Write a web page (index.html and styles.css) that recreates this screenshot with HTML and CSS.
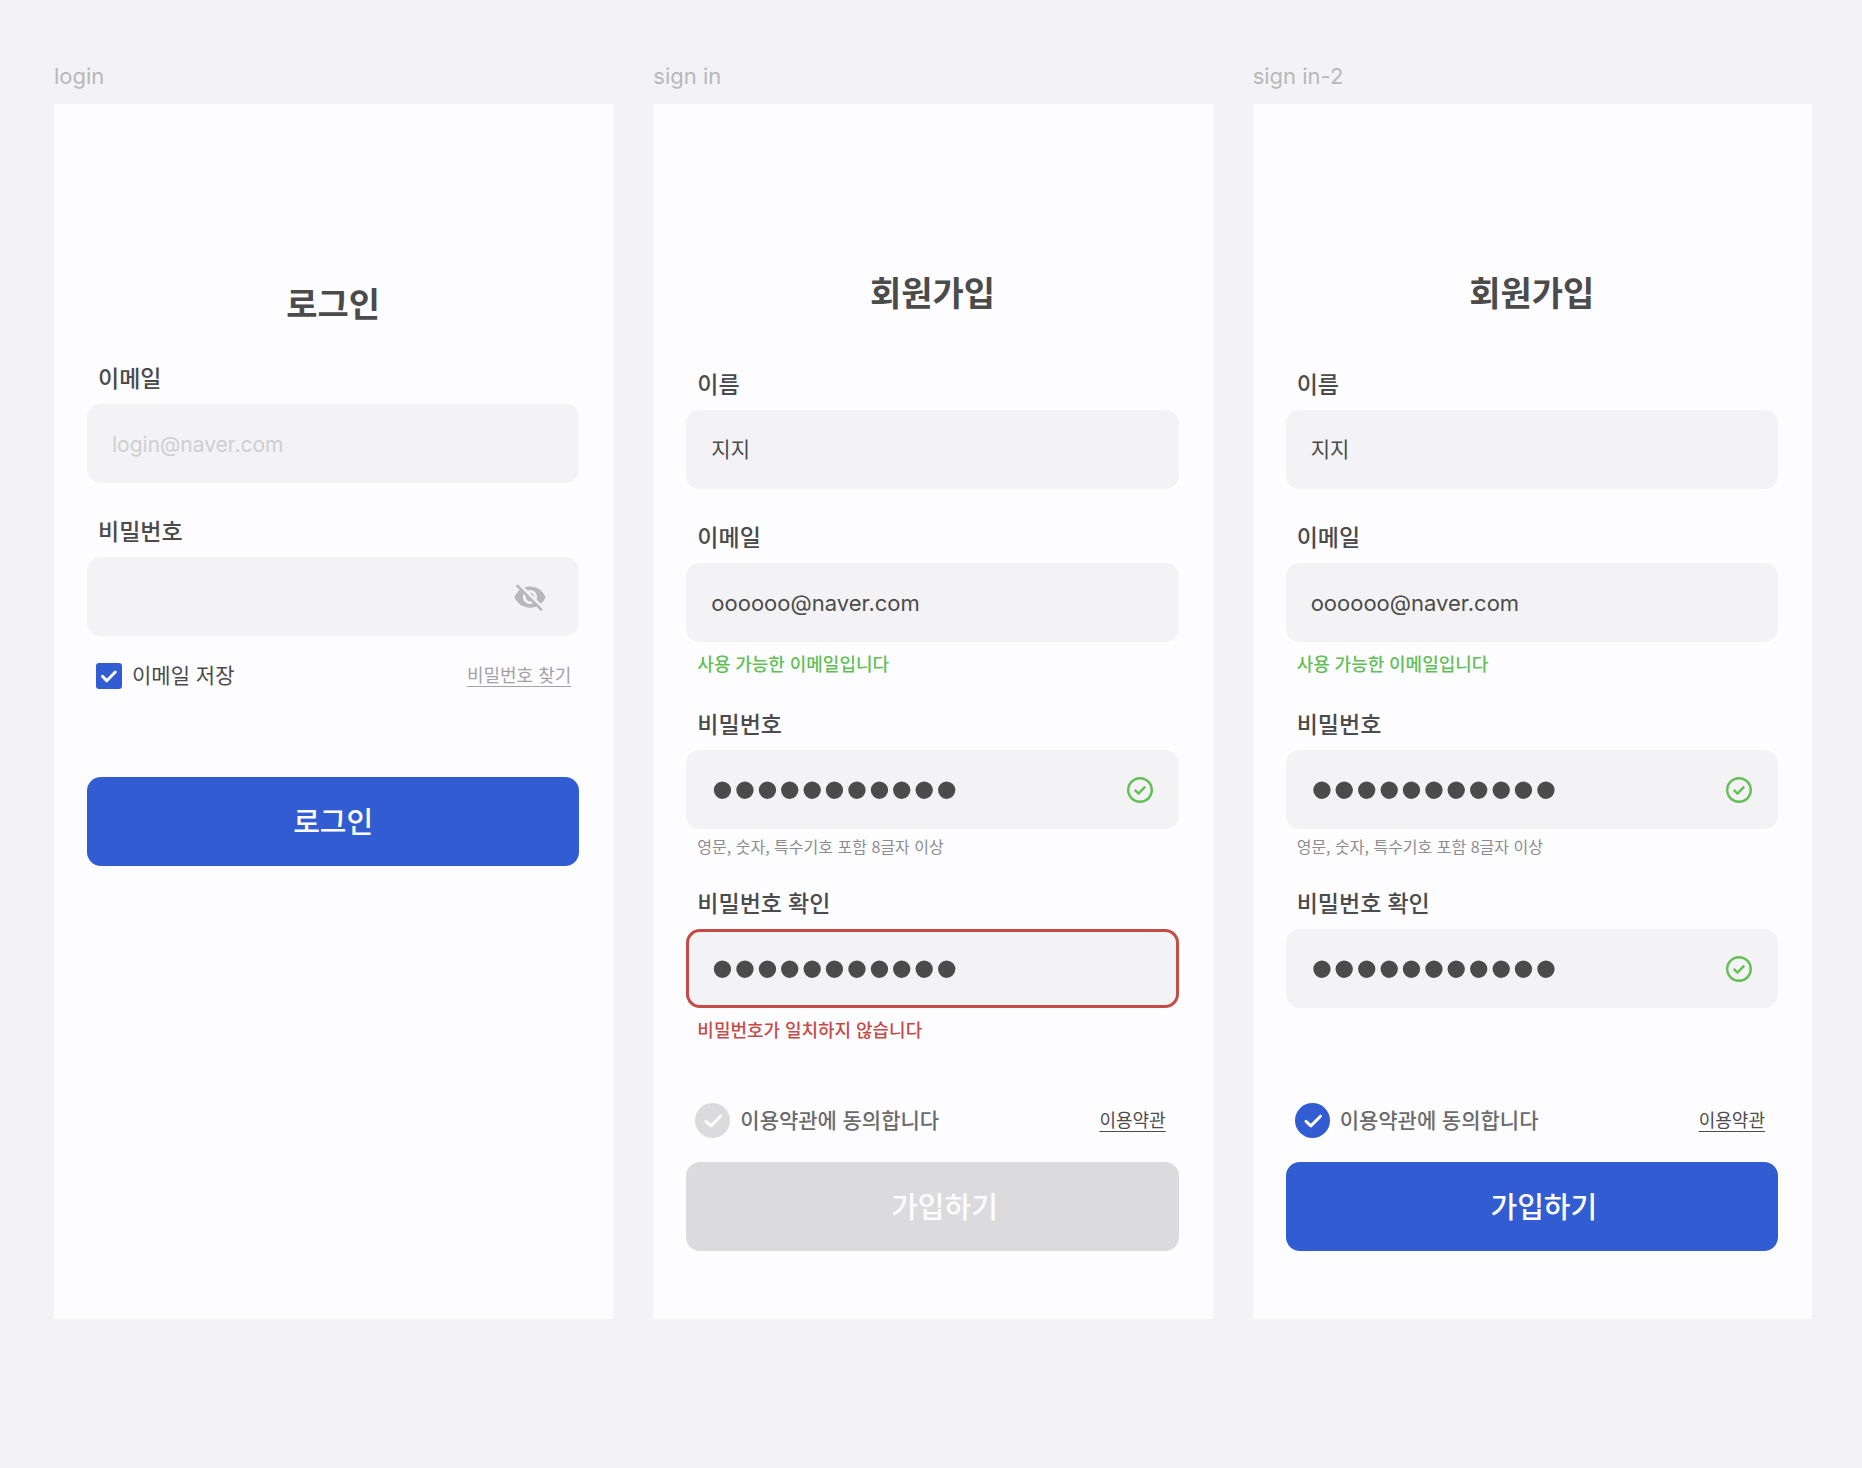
FILE: index.html
```html
<!DOCTYPE html>
<html lang="ko">
<head>
    <meta charset="UTF-8">
    <meta name="viewport" content="width=device-width, initial-scale=1.0">
    <title>로그인 / 회원가입</title>
    <link rel="stylesheet" href="styles.css">
</head>
<body>
    <main class="board">
        <!-- Login -->
        <section class="screen">
            <p class="screen-name">login</p>
            <form class="panel panel-login">
                <h1 class="title">로그인</h1>
                <div class="field">
                    <label for="login-email">이메일</label>
                    <div class="input-box">
                        <input type="email" id="login-email" placeholder="login@naver.com">
                    </div>
                </div>
                <div class="field">
                    <label for="login-password">비밀번호</label>
                    <div class="input-box">
                        <input type="password" id="login-password">
                        <button type="button" class="eye-button" aria-label="비밀번호 보기">
                            <svg viewBox="0 0 24 24" fill="currentColor"><path d="M12 7c2.76 0 5 2.24 5 5 0 .65-.13 1.26-.36 1.83l2.92 2.92c1.51-1.26 2.7-2.89 3.43-4.75-1.73-4.39-6-7.5-11-7.5-1.4 0-2.74.25-3.98.7l2.16 2.16C10.74 7.13 11.35 7 12 7zM2 4.27l2.28 2.28.46.46C3.08 8.3 1.78 10.02 1 12c1.73 4.39 6 7.5 11 7.5 1.55 0 3.03-.3 4.38-.84l.42.42L19.73 22 21 20.73 3.27 3 2 4.27zM7.53 9.8l1.55 1.55c-.05.21-.08.43-.08.65 0 1.66 1.34 3 3 3 .22 0 .44-.03.65-.08l1.55 1.55c-.67.33-1.41.53-2.2.53-2.76 0-5-2.24-5-5 0-.79.2-1.53.53-2.2zm4.31-.78l3.15 3.15.02-.16c0-1.66-1.34-3-3-3l-.17.01z"/></svg>
                        </button>
                    </div>
                </div>
                <div class="option-row">
                    <label class="check">
                        <span class="check-mark">
                            <input type="checkbox" checked>
                            <svg viewBox="0 0 26 26"><path d="M6.5 13.3l4.2 4.5 8.6-8.8"/></svg>
                        </span>
                        이메일 저장
                    </label>
                    <a href="#" class="find-link">비밀번호 찾기</a>
                </div>
                <button type="submit" class="submit">로그인</button>
            </form>
        </section>

        <!-- Sign in: password mismatch -->
        <section class="screen">
            <p class="screen-name">sign in</p>
            <form class="panel panel-join">
                <h1 class="title">회원가입</h1>
                <div class="field">
                    <label for="join-name">이름</label>
                    <div class="input-box">
                        <input type="text" id="join-name" value="지지">
                    </div>
                </div>
                <div class="field">
                    <label for="join-email">이메일</label>
                    <div class="input-box">
                        <input type="email" id="join-email" value="oooooo@naver.com">
                    </div>
                    <p class="message success">사용 가능한 이메일입니다</p>
                </div>
                <div class="field">
                    <label for="join-password">비밀번호</label>
                    <div class="input-box">
                        <input type="password" id="join-password" value="abcdef123!@">
                        <svg class="valid-icon" viewBox="0 0 26 26"><circle cx="13" cy="13" r="11.8"/><path d="M7.8 12.9l3.7 3.7 6.7-7"/></svg>
                    </div>
                    <p class="guide">영문, 숫자, 특수기호 포함 8글자 이상</p>
                </div>
                <div class="field">
                    <label for="join-confirm">비밀번호 확인</label>
                    <div class="input-box invalid">
                        <input type="password" id="join-confirm" value="abcdef123!#" aria-invalid="true">
                    </div>
                    <p class="message error">비밀번호가 일치하지 않습니다</p>
                </div>
                <div class="agree-row">
                    <label class="check">
                        <span class="check-mark round">
                            <input type="checkbox">
                            <svg viewBox="0 0 35 35"><path d="M11 18.3l4.9 4.6 9.6-9.7"/></svg>
                        </span>
                        이용약관에 동의합니다
                    </label>
                    <a href="#" class="terms-link">이용약관</a>
                </div>
                <button type="submit" class="submit" disabled>가입하기</button>
            </form>
        </section>

        <!-- Sign in: all valid -->
        <section class="screen">
            <p class="screen-name">sign in-2</p>
            <form class="panel panel-join">
                <h1 class="title">회원가입</h1>
                <div class="field">
                    <label for="join2-name">이름</label>
                    <div class="input-box">
                        <input type="text" id="join2-name" value="지지">
                    </div>
                </div>
                <div class="field">
                    <label for="join2-email">이메일</label>
                    <div class="input-box">
                        <input type="email" id="join2-email" value="oooooo@naver.com">
                    </div>
                    <p class="message success">사용 가능한 이메일입니다</p>
                </div>
                <div class="field">
                    <label for="join2-password">비밀번호</label>
                    <div class="input-box">
                        <input type="password" id="join2-password" value="abcdef123!@">
                        <svg class="valid-icon" viewBox="0 0 26 26"><circle cx="13" cy="13" r="11.8"/><path d="M7.8 12.9l3.7 3.7 6.7-7"/></svg>
                    </div>
                    <p class="guide">영문, 숫자, 특수기호 포함 8글자 이상</p>
                </div>
                <div class="field">
                    <label for="join2-confirm">비밀번호 확인</label>
                    <div class="input-box">
                        <input type="password" id="join2-confirm" value="abcdef123!@">
                        <svg class="valid-icon" viewBox="0 0 26 26"><circle cx="13" cy="13" r="11.8"/><path d="M7.8 12.9l3.7 3.7 6.7-7"/></svg>
                    </div>
                </div>
                <div class="agree-row">
                    <label class="check">
                        <span class="check-mark round">
                            <input type="checkbox" checked>
                            <svg viewBox="0 0 35 35"><path d="M11 18.3l4.9 4.6 9.6-9.7"/></svg>
                        </span>
                        이용약관에 동의합니다
                    </label>
                    <a href="#" class="terms-link">이용약관</a>
                </div>
                <button type="submit" class="submit">가입하기</button>
            </form>
        </section>
    </main>
</body>
</html>
```
FILE: styles.css
```css
* {
    box-sizing: border-box;
}
body {
    margin: 0;
    font-family: Inter, "Noto Sans CJK KR", sans-serif;
    background-color: #f3f3f5;
    color: #4b4b4b;
}
h1, p {
    margin: 0;
}
input, button {
    font-family: inherit;
    border: none;
    padding: 0;
}
.board {
    display: flex;
    gap: 40px;
    min-height: 100vh;
    padding: 62px 50px 149px 54px;
}
.screen {
    flex: 1;
    min-width: 0;
    display: flex;
    flex-direction: column;
}
.screen-name {
    font-size: 22px;
    line-height: 28px;
    margin-bottom: 14px;
    color: #b8b8ba;
}
.panel {
    flex: 1;
    display: flex;
    flex-direction: column;
    background-color: #fdfdff;
    padding: 166px 34px 68px 33px;
}
.panel-login {
    padding-top: 177px;
}
.title {
    font-size: 34px;
    line-height: 48px;
    font-weight: 700;
    text-align: center;
    margin-bottom: 49px;
}
.panel-login .title {
    margin-bottom: 32px;
}

/* Fields */
.field {
    margin-bottom: 31px;
}
.field label {
    display: block;
    font-size: 23px;
    line-height: 36px;
    font-weight: 500;
    padding-left: 11px;
    margin-bottom: 7px;
}
.input-box {
    display: flex;
    align-items: center;
    height: 79px;
    padding: 0 26px 0 25px;
    background-color: #f3f3f5;
    border-radius: 14px;
}
.input-box input {
    flex: 1;
    min-width: 0;
    height: 100%;
    font-size: 22px;
    color: #4b4b4b;
    background: none;
    outline: none;
}
.input-box input[type="text"] {
    font-size: 21px;
    padding-bottom: 4px;
}
.input-box input::placeholder {
    font-size: 21px;
    color: #cfcfd1;
}
/* big bullets */
.input-box input[type="password"] {
    font-family: "Liberation Sans", sans-serif;
    font-size: 64px;
}
.input-box.invalid {
    box-shadow: inset 0 0 0 3px #c54b49;
}
.eye-button {
    width: 34px;
    height: 34px;
    margin-right: 6px;
    background: none;
    color: #b8b8ba;
    cursor: pointer;
}
.eye-button svg {
    display: block;
}
.valid-icon {
    width: 26px;
    height: 26px;
    fill: none;
    stroke: #62bf56;
    stroke-width: 2.4;
}
.message {
    font-size: 18px;
    line-height: 23px;
    font-weight: 500;
    padding-left: 11px;
    margin-top: 11px;
}
.success {
    color: #62bf56;
}
.error {
    color: #c54b49;
}
.guide {
    font-family: "Noto Sans CJK KR", sans-serif;
    font-size: 16px;
    line-height: 18px;
    padding-left: 11px;
    margin-top: 8px;
    color: #8c8c8e;
}

/* Checkbox rows */
.option-row, .agree-row {
    display: flex;
    justify-content: space-between;
    align-items: center;
}
.option-row {
    padding: 0 8px 0 9px;
    margin: -6px 0 86px;
}
.agree-row {
    padding: 0 13px 0 9px;
    margin: auto 0 24px;
}
.check {
    display: flex;
    align-items: center;
    gap: 10px;
    font-size: 21px;
    line-height: 30px;
}
.agree-row .check {
    font-weight: 500;
    color: #6b6b6b;
}
.check-mark {
    display: grid;
    width: 26px;
    height: 26px;
}
.check-mark.round {
    width: 35px;
    height: 35px;
}
.check-mark input, .check-mark svg {
    grid-area: 1 / 1;
    width: 100%;
    height: 100%;
    margin: 0;
}
.check-mark input {
    appearance: none;
    background-color: #dbdbdd;
    border-radius: 3px;
    cursor: pointer;
}
.check-mark.round input {
    border-radius: 50%;
}
.check-mark input:checked {
    background-color: #315cd2;
}
.check-mark svg {
    pointer-events: none;
    fill: none;
    stroke: #fdfdff;
    stroke-width: 3;
    stroke-linecap: round;
    stroke-linejoin: round;
}
.find-link, .terms-link {
    font-size: 18px;
    line-height: 30px;
    text-underline-offset: 4px;
    text-decoration-thickness: 1px;
}
.find-link {
    color: #a3a3a5;
}
.terms-link {
    color: #4b4b4b;
}

/* Submit */
.submit {
    height: 89px;
    padding-bottom: 4px;
    font-size: 29px;
    font-weight: 500;
    color: #fdfdff;
    background-color: #315cd2;
    border-radius: 14px;
    cursor: pointer;
}
.submit:disabled {
    background-color: #dbdbdd;
    cursor: default;
}
.panel-join .submit {
    padding-left: 24px;
}
```
